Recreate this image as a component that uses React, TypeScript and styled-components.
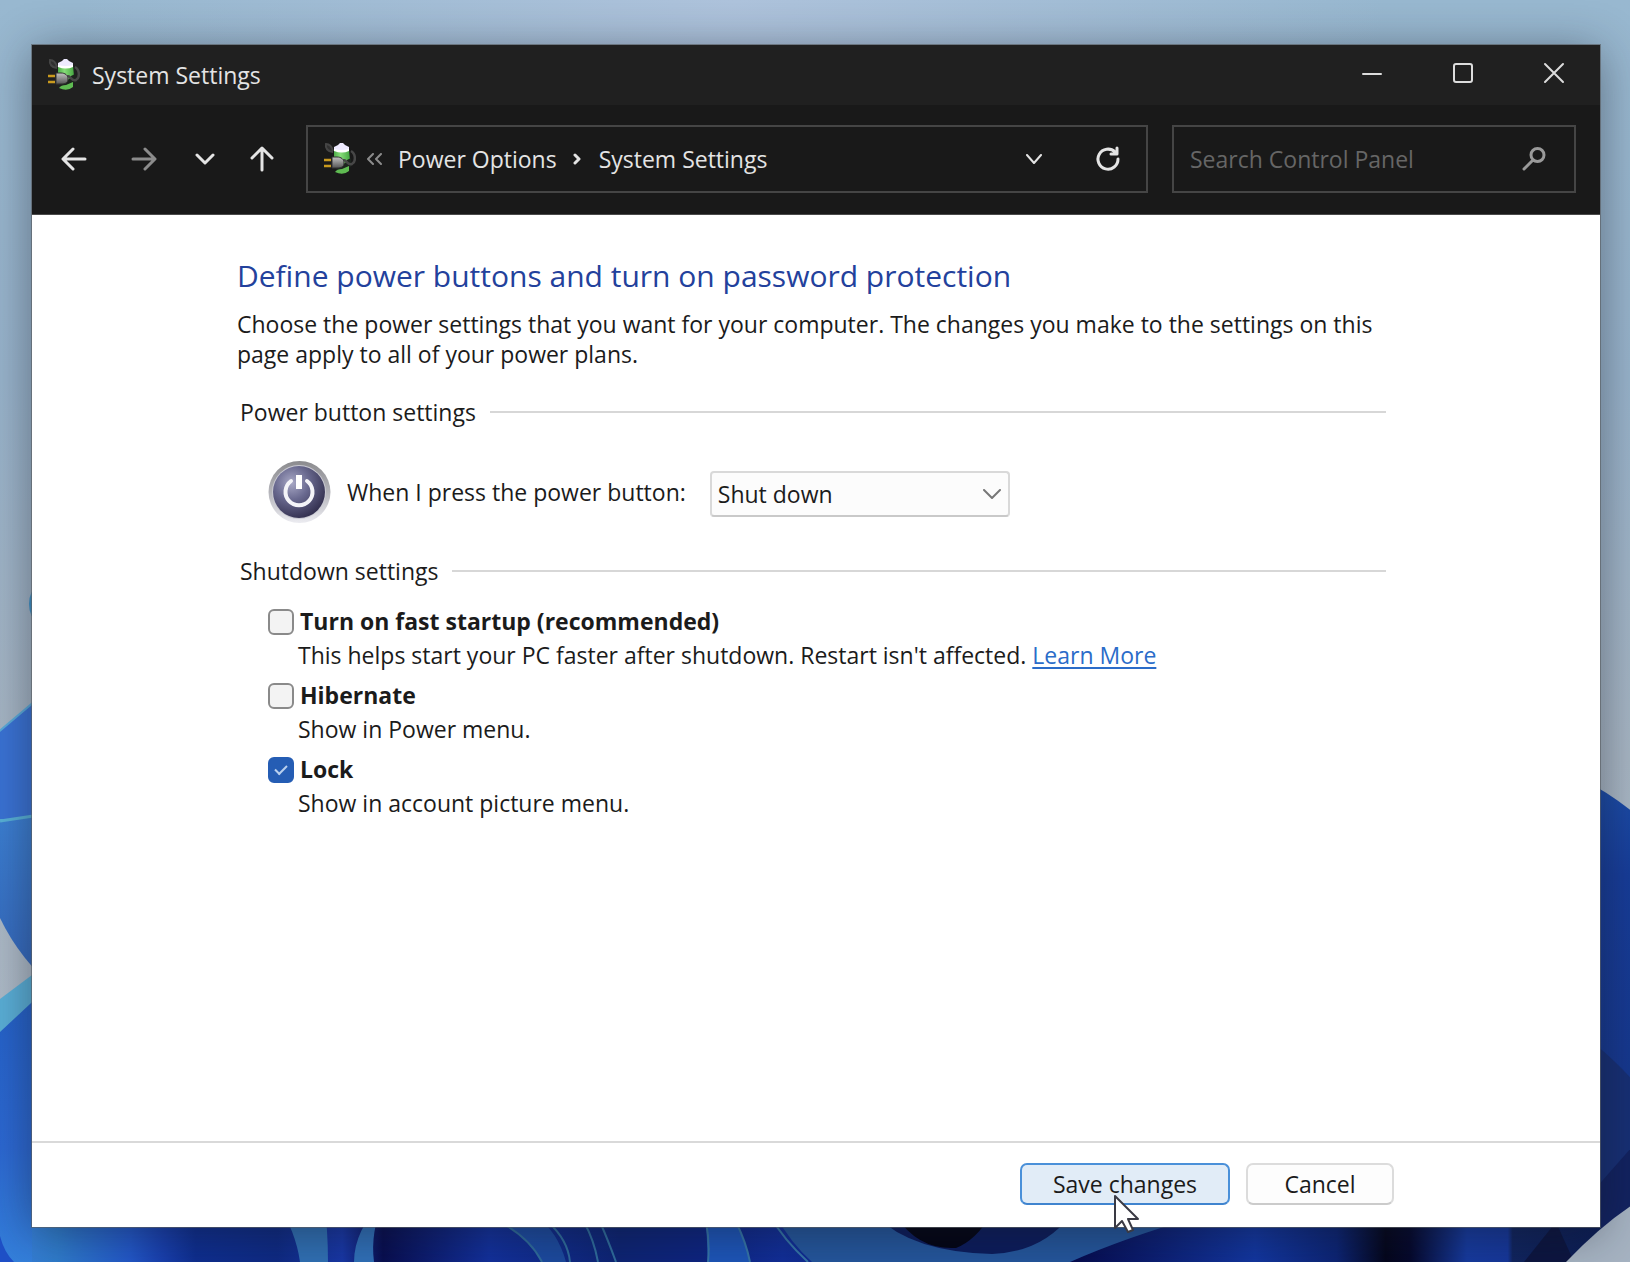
import React, { useState } from "react";
import styled, { createGlobalStyle } from "styled-components";

const GlobalStyle = createGlobalStyle`
  *, *::before, *::after { box-sizing: border-box; }
  body {
    margin: 0;
    font-family: "Open Sans", "Noto Sans", sans-serif;
    font-size: 23px;
    line-height: 30px;
    color: #1b1b1b;
  }
  button, input, select { font: inherit; color: inherit; }
`;

const Desktop = styled.div`
  position: relative;
  display: flex;
  min-height: 100vh;
  padding: 45px 30px 35px 32px;
  overflow: hidden;
`;

const WallpaperArt = styled.svg`
  position: absolute;
  inset: 0;
  width: 100%;
  height: 100%;
`;

const Window = styled.main`
  position: relative;
  flex: 1;
  display: flex;
  flex-direction: column;
  min-width: 0;
  background: #fff;
  outline: 1px solid rgba(90, 95, 100, 0.65);
  box-shadow: 0 6px 44px rgba(20, 25, 35, 0.46);
`;

const TitleBar = styled.header`
  display: flex;
  align-items: center;
  height: 60px;
  padding: 0 1px 0 16px;
  background: #202020;
  color: #e4e4e4;
`;

const Title = styled.h1`
  flex: 1;
  margin: 0 0 0 12px;
  font-size: 23px;
  font-weight: 400;
`;

const CaptionButton = styled.button`
  display: grid;
  place-items: center;
  width: 91px;
  height: 60px;
  padding: 0 0 4px;
  border: 0;
  background: none;
  color: #dcdcdc;
`;

const NavBar = styled.nav`
  display: flex;
  align-items: center;
  height: 110px;
  padding: 0 24px 1px 20px;
  background: #191919;
  color: #e4e4e4;
  border-bottom: 1px solid #4a4a4a;
`;

const NavButton = styled.button<{ $width: number; $dim?: boolean }>`
  display: grid;
  place-items: center;
  width: ${(p) => p.$width}px;
  height: 60px;
  padding: 0;
  border: 0;
  background: none;
  color: ${(p) => (p.$dim ? "#8c8c8c" : "#e4e4e4")};
`;

const AddressBar = styled.div`
  flex: 1;
  display: flex;
  align-items: center;
  height: 68px;
  margin-right: 24px;
  padding: 0 8px 0 16px;
  border: 2px solid #454545;
`;

const Crumbs = styled.div`
  flex: 1;
  display: flex;
  align-items: center;
  gap: 16px;
  margin-left: 10px;
`;

const Crumb = styled.a`
  color: inherit;
  text-decoration: none;
  white-space: nowrap;
`;

const SearchBox = styled.label`
  display: flex;
  align-items: center;
  width: 404px;
  height: 68px;
  padding: 0 28px 0 16px;
  border: 2px solid #454545;
  color: #9a9a9a;
`;

const SearchInput = styled.input`
  flex: 1;
  min-width: 0;
  padding: 0;
  border: 0;
  outline: 0;
  background: none;
  &::placeholder { color: #666; opacity: 1; }
`;

const Content = styled.section`
  flex: 1;
  padding: 40px 214px 40px 205px;
`;

const Heading = styled.h2`
  margin: 0 0 12px;
  font-size: 30px;
  line-height: 42px;
  font-weight: 400;
  color: #23419c;
`;

const Intro = styled.p`
  max-width: 1140px;
  margin: 0 0 28px;
`;

const Group = styled.fieldset`
  min-width: 0;
  margin: 0 0 32px;
  padding: 0;
  border: 0;
`;

const GroupTitle = styled.legend`
  display: flex;
  align-items: center;
  gap: 14px;
  width: 100%;
  padding: 0 0 0 3px;
  &::after {
    content: "";
    flex: 1;
    height: 2px;
    background: #d7d7d7;
  }
`;

const PowerRow = styled.div`
  display: flex;
  align-items: center;
  margin: 33px 0 0 31px;
`;

const PowerLabel = styled.label`
  margin: 0 24px 0 16px;
  white-space: nowrap;
`;

const SelectWrap = styled.div`
  position: relative;
  width: 300px;
  margin-top: 4px;
  svg {
    position: absolute;
    right: 9px;
    top: 18px;
    pointer-events: none;
  }
`;

const Select = styled.select`
  appearance: none;
  display: block;
  width: 100%;
  height: 46px;
  padding: 0 30px 0 6px;
  border: 2px solid #d9d9d9;
  border-bottom-color: #c9c9c9;
  border-radius: 4px;
  background: #fcfcfc;
`;

const OptionList = styled.div`
  display: grid;
  gap: 10px;
  padding: 20px 0 0 31px;
`;

const OptionHead = styled.div`
  display: flex;
  align-items: center;
  gap: 6px;
  height: 32px;
  label {
    padding-bottom: 2px;
    font-weight: 700;
  }
`;

const Checkbox = styled.input`
  appearance: none;
  display: grid;
  place-items: center;
  width: 26px;
  height: 26px;
  margin: 0;
  border: 2px solid #8a8a8a;
  border-radius: 6px;
  background: #f3f3f3;
  &:checked {
    border-color: #255db4;
    background: #255db4;
  }
  &:checked::after {
    content: "";
    width: 12px;
    height: 7px;
    margin-bottom: 4px;
    border: solid #b9d0ee;
    border-width: 0 0 2px 2px;
    transform: rotate(-45deg);
  }
`;

const OptionText = styled.p`
  margin: 2px 0 0 30px;
`;

const Link = styled.a`
  color: #2b6cc9;
  text-decoration: underline;
  text-decoration-thickness: 2px;
  text-underline-offset: 3px;
`;

const Footer = styled.footer`
  display: flex;
  justify-content: flex-end;
  gap: 16px;
  padding: 20px 206px 22px;
  border-top: 2px solid #d9d9d9;
`;

const PushButton = styled.button<{ $width: number; $active?: boolean }>`
  position: relative;
  width: ${(p) => p.$width}px;
  height: 42px;
  padding: 0;
  border: 2px solid ${(p) => (p.$active ? "#4a90d9" : "#dcdcdc")};
  border-bottom-color: ${(p) => (p.$active ? "#3f84cf" : "#cbcbcb")};
  border-radius: 7px;
  background: ${(p) => (p.$active ? "#e1ecf7" : "#fdfdfd")};
`;

const Pointer = styled.svg`
  position: absolute;
  left: 91px;
  top: 29px;
  z-index: 1;
  pointer-events: none;
`;

const BatteryIcon = () => (
  <svg width="32" height="32" viewBox="0 0 32 32" aria-hidden="true">
    <defs>
      <linearGradient id="cell" x1="0" x2="1">
        <stop offset="0" stopColor="#4fae4a" />
        <stop offset="0.4" stopColor="#86dd78" />
        <stop offset="1" stopColor="#47a742" />
      </linearGradient>
      <linearGradient id="plug" x1="0" y1="0" x2="0" y2="1">
        <stop offset="0" stopColor="#c4c4c4" />
        <stop offset="1" stopColor="#555" />
      </linearGradient>
    </defs>
    <path d="M9 9C4 9 1 5 2 1c4 0 6 3 7 7" fill="#303030" stroke="#454545" strokeWidth="2" />
    <path d="M10 8V4l4-2 2-2h3l2 2 4 2v4z" fill="#eeeaff" />
    <path d="M10 7q8 3 15 0l1 10-8 5-8-6z" fill="url(#cell)" />
    <path d="M10 6q8 2 15 0v2q-7 3-15 0z" fill="#fff" />
    <path d="M11 23q9 2 12-6l4-2v9l-5 2-9 2z" fill="#1d241e" />
    <path d="M11 29q2-3 7-3l7-3v5q-6 5-14 1z" fill="#5fbb52" />
    <path d="M19 18c3-3 4 5 9 3 4-2 4-10-1-13" fill="none" stroke="#474747" strokeWidth="2.500" />
    <path d="M8 14h5c4 0 7 2 7 6s-3 5-7 5H8z" fill="url(#plug)" stroke="#333" strokeWidth="1" />
    <path d="M0 17h7M0 23h7" stroke="#c99a1e" strokeWidth="2.400" />
  </svg>
);

const PowerIcon = () => (
  <svg width="63" height="64" viewBox="0 0 63 64" aria-hidden="true">
    <defs>
      <linearGradient id="rim" x1="0" y1="0" x2="0" y2="1">
        <stop offset="0" stopColor="#8b8b8e" />
        <stop offset="0.5" stopColor="#b4b4ba" />
        <stop offset="1" stopColor="#ececf1" />
      </linearGradient>
      <radialGradient id="dome" cx="0.36" cy="0.32" r="0.72">
        <stop offset="0" stopColor="#a9a9c6" />
        <stop offset="0.45" stopColor="#6a6a90" />
        <stop offset="1" stopColor="#33304f" />
      </radialGradient>
    </defs>
    <circle cx="31.500" cy="32" r="31" fill="url(#rim)" />
    <circle cx="31" cy="32" r="27" fill="#c9c9d2" />
    <circle cx="31" cy="32" r="26" fill="url(#dome)" />
    <path d="M23 21a13.500 13.500 0 1 0 16 0" fill="none" stroke="#f4f4f8" strokeWidth="4" strokeLinecap="round" />
    <path d="M31 15v14" stroke="#fff" strokeWidth="6" />
  </svg>
);

type GlyphProps = { w: number; h: number; d: string; stroke?: number; color?: string };
const Glyph = ({ w, h, d, stroke = 2, color = "currentColor" }: GlyphProps) => (
  <svg width={w} height={h} viewBox={`0 0 ${w} ${h}`} fill="none" stroke={color} strokeWidth={stroke} strokeLinecap="round" strokeLinejoin="round" aria-hidden="true">
    <path d={d} />
  </svg>
);

const Wallpaper = () => (
  <WallpaperArt viewBox="0 0 1630 1262" preserveAspectRatio="none" aria-hidden="true">
    <defs>
      <linearGradient id="sky" x1="0" y1="0" x2="0" y2="1">
        <stop offset="0" stopColor="#98b8d0" />
        <stop offset="0.3" stopColor="#98b3cb" />
        <stop offset="0.6" stopColor="#a7b5c3" />
        <stop offset="1" stopColor="#b4bfcb" />
      </linearGradient>
      <radialGradient id="glow" cx="0.45" cy="0" r="0.4">
        <stop offset="0" stopColor="#aec3dc" />
        <stop offset="1" stopColor="#aec3dc" stopOpacity="0" />
      </radialGradient>
      <linearGradient id="petalA" x1="0" y1="0" x2="0" y2="1">
        <stop offset="0" stopColor="#3c7fd2" />
        <stop offset="1" stopColor="#3465b8" />
      </linearGradient>
      <linearGradient id="petalB" x1="0" y1="0" x2="0" y2="1">
        <stop offset="0" stopColor="#2460c6" />
        <stop offset="0.6" stopColor="#2c68d2" />
        <stop offset="1" stopColor="#3480dc" />
      </linearGradient>
      <linearGradient id="right" x1="0" y1="0" x2="0" y2="1">
        <stop offset="0" stopColor="#1c4da8" />
        <stop offset="0.2" stopColor="#173c98" />
        <stop offset="1" stopColor="#153384" />
      </linearGradient>
      <linearGradient id="floor" gradientUnits="userSpaceOnUse" x1="0" y1="0" x2="1630" y2="0">
        <stop offset="0" stopColor="#3a7fdc" />
        <stop offset="0.035" stopColor="#2f7ccc" />
        <stop offset="0.08" stopColor="#2257c8" />
        <stop offset="0.1" stopColor="#183fae" />
        <stop offset="0.12" stopColor="#0e2e90" />
        <stop offset="0.17" stopColor="#0e2a84" />
        <stop offset="0.21" stopColor="#1837a6" />
        <stop offset="0.235" stopColor="#080e50" />
        <stop offset="0.3" stopColor="#12309c" />
        <stop offset="0.38" stopColor="#0d2474" />
        <stop offset="0.43" stopColor="#0d2480" />
        <stop offset="0.48" stopColor="#112e98" />
        <stop offset="0.55" stopColor="#0d2480" />
        <stop offset="0.66" stopColor="#060c50" />
        <stop offset="0.77" stopColor="#1236a0" />
        <stop offset="0.82" stopColor="#0c2474" />
        <stop offset="0.85" stopColor="#04061c" />
        <stop offset="0.865" stopColor="#05082c" />
        <stop offset="0.9" stopColor="#163a9e" />
        <stop offset="0.925" stopColor="#16379a" />
        <stop offset="0.928" stopColor="#10245e" />
        <stop offset="1" stopColor="#0a1a50" />
      </linearGradient>
    </defs>
    <rect width="1630" height="1262" fill="url(#sky)" />
    <rect width="1630" height="1262" fill="url(#glow)" />
    <ellipse cx="37" cy="604" rx="8" ry="16" fill="#3f92c8" />
    <path d="M-4 734L60 680V820H-4z" fill="#3a72d4" stroke="#5aa9d8" strokeWidth="2" />
    <path d="M0 821L60 811V994Q20 960 0 918z" fill="url(#petalA)" />
    <path d="M0 821L60 812" stroke="#58b0d6" strokeWidth="3" />
    <path d="M0 999L60 954V1060H0z" fill="#5aaed6" />
    <path d="M0 1032L60 976V1262H0z" fill="url(#petalB)" />
    <path d="M1580 778Q1612 794 1640 818V1262H1580z" fill="url(#right)" />
    <path d="M1580 1034Q1604 1048 1640 1088V1262H1580z" fill="#172f74" />
    <path d="M1640 1138L1580 1206V1262H1640z" fill="#122260" />
    <rect x="32" y="1200" width="1568" height="62" fill="url(#floor)" />
    <path d="M0 1236Q4 1252 14 1262H0z" fill="#1f50c8" />
    <path d="M276 1200h48q4 30 4 62h-28q-4-30-24-62z" fill="#3070b4" />
    <path d="M384 1200q-30 30-30 62h20q-4-30 10-62z" fill="#3070b8" />
    <path d="M490 1216q40 20 52 46h24q-8-30-30-46z" fill="#2258a8" opacity="0.7" />
    <path d="M500 1222q30 16 42 40M548 1222q20 18 22 40M584 1222q10 18 14 40M600 1222q8 18 16 40" fill="none" stroke="#2f6c9c" strokeWidth="2" />
    <path d="M706 1222h30q10 20 14 40h-42z" fill="#1d55b8" />
    <path d="M706 1222q4 20 2 40M736 1222q10 20 14 40M770 1216q14 24 38 46" fill="none" stroke="#3575a8" strokeWidth="2" />
    <path d="M776 1216h424q-76 22-130 46H812q-22-20-36-46z" fill="#24569c" />
    <path d="M876 1216q36 36 116 38 50-2 78-38z" fill="#0c1c5c" />
    <path d="M896 1216q22 34 60 32 20-8 34-32z" fill="#030414" />
    <path d="M1556 1222l-32 40h50z" fill="#0c1540" />
    <path d="M1640 1200Q1604 1222 1566 1262H1640z" fill="#a6b3c2" />
  </WallpaperArt>
);

type Setting = { id: string; label: string; text: string; link?: string; on: boolean };
const SETTINGS: Setting[] = [
  { id: "fast", label: "Turn on fast startup (recommended)", text: "This helps start your PC faster after shutdown. Restart isn't affected.", link: "Learn More", on: false },
  { id: "hibernate", label: "Hibernate", text: "Show in Power menu.", on: false },
  { id: "lock", label: "Lock", text: "Show in account picture menu.", on: true },
];

export default function App() {
  const [checked, setChecked] = useState<Record<string, boolean>>(
    Object.fromEntries(SETTINGS.map((s) => [s.id, s.on]))
  );
  return (
    <>
      <GlobalStyle />
      <Desktop>
        <Wallpaper />
        <Window>
          <TitleBar>
            <BatteryIcon />
            <Title>System Settings</Title>
            <CaptionButton aria-label="Minimize"><Glyph w={22} h={22} d="M2 12h18" /></CaptionButton>
            <CaptionButton aria-label="Maximize"><Glyph w={22} h={22} d="M4 2h14q2 0 2 2v14q0 2-2 2H4q-2 0-2-2V4q0-2 2-2z" /></CaptionButton>
            <CaptionButton aria-label="Close"><Glyph w={22} h={22} d="M2 2l18 18M20 2L2 20" /></CaptionButton>
          </TitleBar>
          <NavBar>
            <NavButton $width={44} aria-label="Back"><Glyph w={26} h={24} stroke={3} d="M12 2L2 12l10 10M3 12h21" /></NavButton>
            <NavButton $width={96} $dim aria-label="Forward"><Glyph w={26} h={24} stroke={3} d="M14 2l10 10-10 10M23 12H2" /></NavButton>
            <NavButton $width={26} aria-label="Recent locations"><Glyph w={20} h={12} stroke={3} d="M2 2l8 8 8-8" /></NavButton>
            <NavButton $width={88} aria-label="Up"><Glyph w={24} h={26} stroke={3} d="M2 12L12 2l10 10M12 3v21" /></NavButton>
            <AddressBar>
              <BatteryIcon />
              <Crumbs>
                <Glyph w={16} h={12} color="#8c8c8c" d="M7 1L2 6l5 5M15 1l-5 5 5 5" />
                <Crumb href="#power">Power Options</Crumb>
                <Glyph w={10} h={12} stroke={3} d="M2 2l4 4-4 4" />
                <Crumb href="#system">System Settings</Crumb>
              </Crumbs>
              <NavButton $width={88} aria-label="Previous locations"><Glyph w={18} h={10} d="M2 1l7 8 7-8" /></NavButton>
              <NavButton $width={60} aria-label="Refresh"><Glyph w={26} h={26} stroke={3} d="M20 6A10 10 0 1 0 23 13M22 2v6h-6" /></NavButton>
            </AddressBar>
            <SearchBox>
              <SearchInput type="text" placeholder="Search Control Panel" aria-label="Search Control Panel" />
              <Glyph w={24} h={24} stroke={3} d="M9 8a6 6 0 1 1 13 0a6 6 0 1 1-13 0M11 13L2 22" />
            </SearchBox>
          </NavBar>
          <Content>
            <Heading>Define power buttons and turn on password protection</Heading>
            <Intro>
              Choose the power settings that you want for your computer. The changes you make to the settings on this
              page apply to all of your power plans.
            </Intro>
            <Group>
              <GroupTitle>Power button settings</GroupTitle>
              <PowerRow>
                <PowerIcon />
                <PowerLabel htmlFor="action">When I press the power button:</PowerLabel>
                <SelectWrap>
                  <Select id="action" defaultValue="Shut down">
                    <option>Shut down</option>
                    <option>Sleep</option>
                    <option>Do nothing</option>
                  </Select>
                  <Glyph w={18} h={10} color="#777" d="M1 1l8 8 8-8" />
                </SelectWrap>
              </PowerRow>
            </Group>
            <Group>
              <GroupTitle>Shutdown settings</GroupTitle>
              <OptionList>
                {SETTINGS.map((s) => (
                  <div key={s.id}>
                    <OptionHead>
                      <Checkbox
                        type="checkbox"
                        id={s.id}
                        checked={checked[s.id]}
                        onChange={(e) => setChecked({ ...checked, [s.id]: e.target.checked })}
                      />
                      <label htmlFor={s.id}>{s.label}</label>
                    </OptionHead>
                    <OptionText>
                      {s.text} {s.link && <Link href="#learn">{s.link}</Link>}
                    </OptionText>
                  </div>
                ))}
              </OptionList>
            </Group>
          </Content>
          <Footer>
            <PushButton $width={210} $active>
              Save changes
              <Pointer width="28" height="42" viewBox="0 0 28 42" aria-hidden="true">
                <path d="M2 2v32l7-7 6 11 5-2-5-11h10z" fill="#fff" stroke="#3a3a44" strokeWidth="2" strokeLinejoin="round" />
              </Pointer>
            </PushButton>
            <PushButton $width={148}>Cancel</PushButton>
          </Footer>
        </Window>
      </Desktop>
    </>
  );
}
